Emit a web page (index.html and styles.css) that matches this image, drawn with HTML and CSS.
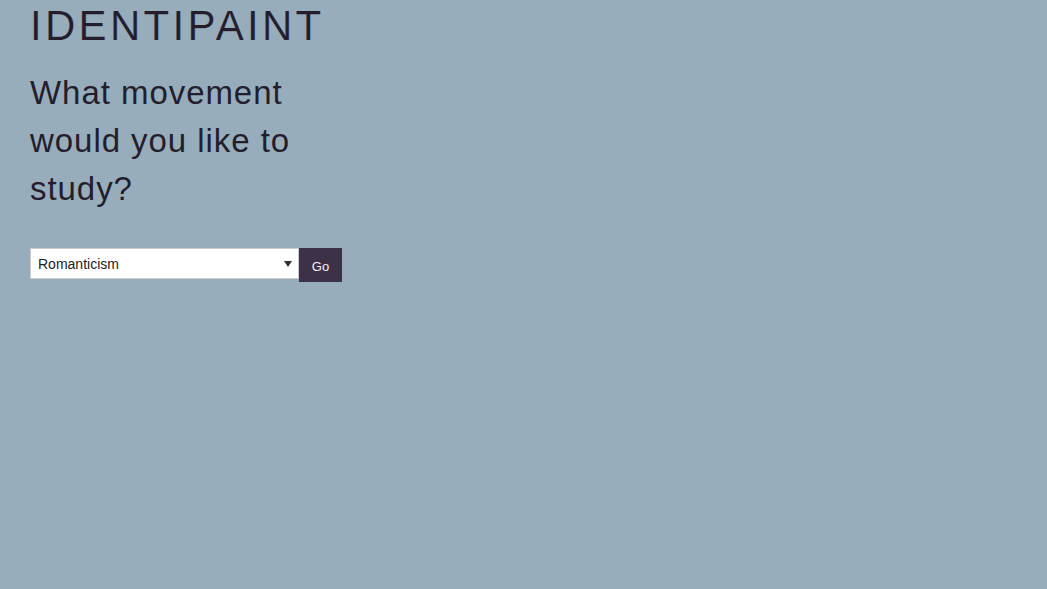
FILE: index.html
```html
<!DOCTYPE html>
<html lang="en">
<head>
<meta charset="utf-8">
<title>Identipaint</title>
<link rel="stylesheet" href="styles.css">
</head>
<body>
<main class="page">
  <h1 class="logo">IDENTIPAINT</h1>
  <h2 class="question">What movement<br>would you like to<br>study?</h2>
  <form class="picker">
    <div class="select-wrap">
      <select class="select">
        <option>Romanticism</option>
        <option>Impressionism</option>
        <option>Baroque</option>
        <option>Cubism</option>
      </select>
    </div>
    <button type="button" class="go">Go</button>
  </form>
</main>
</body>
</html>
```
FILE: styles.css
```css
html, body {
  margin: 0;
  padding: 0;
  background: #97adbc;
  height: 100%;
}
body {
  font-family: "Liberation Sans", Arial, sans-serif;
  color: #241d2b;
}
.page {
  padding: 1px 0 0 30px;
  display: flex;
  flex-direction: column;
  align-items: flex-start;
}
.logo {
  margin: 0;
  font-size: 42px;
  line-height: 50px;
  font-weight: normal;
  letter-spacing: 3.3px;
  -webkit-text-stroke: 0.2px #97adbc;
}
.question {
  margin: 18px 0 0 0;
  font-size: 33px;
  line-height: 48px;
  font-weight: normal;
  letter-spacing: 0.95px;
}
.picker {
  margin-top: 35px;
  display: flex;
  align-items: flex-start;
}
.select-wrap {
  position: relative;
}
.select-wrap::after {
  content: "";
  position: absolute;
  right: 7px;
  top: 13px;
  border-left: 4px solid transparent;
  border-right: 4px solid transparent;
  border-top: 6px solid #333;
  pointer-events: none;
}
.select {
  -webkit-appearance: none;
  appearance: none;
  display: block;
  width: 269px;
  height: 31px;
  margin: 0;
  padding: 0 20px 0 7px;
  border: 1px solid #c9cdd1;
  border-radius: 0;
  background: #fff;
  font-family: "Liberation Sans", Arial, sans-serif;
  font-size: 14px;
  color: #222;
}
.go {
  margin: 0;
  width: 43px;
  height: 34px;
  border: 0;
  border-radius: 0;
  background: #3d3148;
  color: #f4f2f6;
  font-family: "Liberation Sans", Arial, sans-serif;
  font-size: 13px;
  padding: 2px 0 0 0;
}
```
